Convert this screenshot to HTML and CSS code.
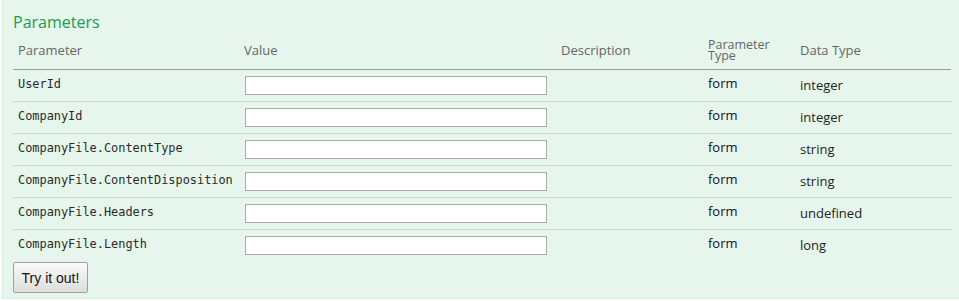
FILE: index.html
```html
<!DOCTYPE html>
<html lang="en">
    <head>
        <meta charset="UTF-8" />
        <title>Parameters</title>
        <link rel="stylesheet" href="styles.css">
    </head>
    <body>
        <div class="content">
            <h4 class="title">Parameters</h4>
            <table class="params">
                <thead>
                    <tr>
                        <th class="col-name">Parameter</th>
                        <th class="col-value">Value</th>
                        <th class="col-desc">Description</th>
                        <th class="col-ptype"><span class="small">Parameter Type</span></th>
                        <th class="col-dtype">Data Type</th>
                    </tr>
                </thead>
                <tbody>
                    <tr>
                        <td class="code">UserId</td>
                        <td><input class="field" type="text" /></td>
                        <td></td>
                        <td class="ptype">form</td>
                        <td class="dtype">integer</td>
                    </tr>
                    <tr>
                        <td class="code">CompanyId</td>
                        <td><input class="field" type="text" /></td>
                        <td></td>
                        <td class="ptype">form</td>
                        <td class="dtype">integer</td>
                    </tr>
                    <tr>
                        <td class="code">CompanyFile.ContentType</td>
                        <td><input class="field" type="text" /></td>
                        <td></td>
                        <td class="ptype">form</td>
                        <td class="dtype">string</td>
                    </tr>
                    <tr>
                        <td class="code">CompanyFile.ContentDisposition</td>
                        <td><input class="field" type="text" /></td>
                        <td></td>
                        <td class="ptype">form</td>
                        <td class="dtype">string</td>
                    </tr>
                    <tr>
                        <td class="code">CompanyFile.Headers</td>
                        <td><input class="field" type="text" /></td>
                        <td></td>
                        <td class="ptype">form</td>
                        <td class="dtype">undefined</td>
                    </tr>
                    <tr class="last">
                        <td class="code">CompanyFile.Length</td>
                        <td><input class="field" type="text" /></td>
                        <td></td>
                        <td class="ptype">form</td>
                        <td class="dtype">long</td>
                    </tr>
                </tbody>
            </table>
            <div class="actions">
                <button class="submit" type="button">Try it out!</button>
            </div>
        </div>
    </body>
</html>
```

FILE: styles.css
```css
html,
body {
    margin: 0;
    padding: 0;
    background: #ffffff;
}

body {
    font-family: "Open Sans", "DejaVu Sans", sans-serif;
    height: 301px;
    overflow: hidden;
}

.content {
    margin-left: 2px;
    width: 1000px;
    height: 299px;
    padding: 10px 10px 0 10px;
    box-sizing: border-box;
    background-color: #e7f6ec;
    border: 1px solid #d6ede0;
    border-top: none;
}

.title {
    margin: 0;
    font-size: 16px;
    font-weight: normal;
    line-height: 24px;
    color: #1a9b4c;
}

.params {
    width: 938px;
    border-collapse: collapse;
    margin-top: 2px;
    table-layout: fixed;
}

.params thead tr {
    height: 33px;
}

.params th {
    text-align: left;
    font-weight: normal;
    font-size: 13px;
    line-height: 16px;
    color: #666666;
    padding: 0 5px 4px 5px;
    vertical-align: middle;
    border-bottom: 1px solid #959c97;
}

.params th .small {
    display: block;
    font-size: 12.5px;
    line-height: 11px;
}

.col-name { width: 216px; }
.col-value { width: 307px; }
.col-desc { width: 137px; }
.col-ptype { width: 82px; }

.params tbody tr {
    height: 32px;
}

.params td {
    padding: 0 5px;
    border-bottom: 1px solid #c8d4cc;
    vertical-align: top;
    font-size: 13px;
    line-height: 17px;
    color: #000000;
}

.params tr.last td {
    border-bottom: none;
}

.params td.code {
    font-family: "DejaVu Sans Mono", monospace;
    font-size: 11.9px;
    padding-top: 6px;
    color: #2a2a2a;
}

.field {
    display: block;
    width: 302px;
    height: 19px;
    margin: 6px 0 0 1px;
    padding: 0;
    box-sizing: border-box;
    border: 1px solid #aaaaaa;
    background: #ffffff;
}

.params td.ptype {
    padding-top: 5px;
    color: #1a0a2a;
}

.params td.dtype {
    padding-top: 7px;
    color: #222222;
}

.actions {
    padding-top: 1px;
}

.submit {
    width: 75px;
    height: 31px;
    font-family: "Liberation Sans", Arial, sans-serif;
    font-size: 14px;
    color: #111111;
    background: linear-gradient(#fafafa, #dddddd);
    border: 1px solid #a0a0a0;
    border-radius: 2px;
    padding: 0;
}
```
